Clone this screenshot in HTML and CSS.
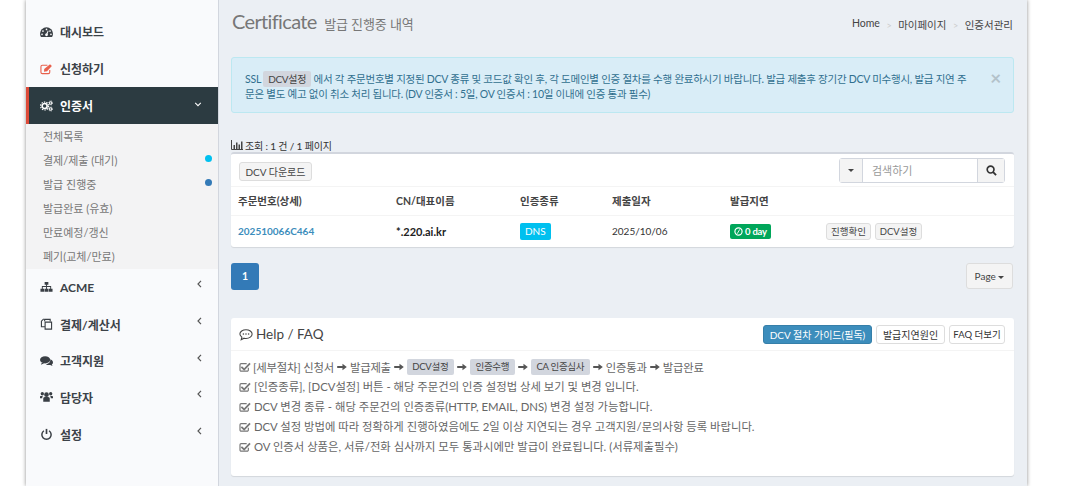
FILE: index.html
```html
<!DOCTYPE html>
<html lang="ko">
<head>
    <meta charset="UTF-8">
    <title>Certificate - 발급 진행중 내역</title>
    <link rel="stylesheet" href="styles.css">
</head>
<body>
<svg class="defs" width="0" height="0">
    <symbol id="i-check" viewBox="0 0 14 12"><path d="M11 7v2.600A1.400 1.400 0 0 1 9.600 11H2.400A1.400 1.400 0 0 1 1 9.600V3.400A1.400 1.400 0 0 1 2.400 2H9" fill="none" stroke="currentColor" stroke-width="1.400"/><path d="M3.400 5.200 6 7.600 12.200 1l1.600 1.500L6 10.400 1.900 6.600z" fill="currentColor"/></symbol>
    <symbol id="i-arrow" viewBox="0 0 12 10"><path d="M0 3.800h6.600V1L12 5 6.600 9V6.200H0z" fill="currentColor"/></symbol>
    <symbol id="i-left" viewBox="0 0 5 8"><path d="M4 .8 1 4l3 3.200" fill="none" stroke="currentColor" stroke-width="1.200"/></symbol>
</svg>
<div class="shell">
    <aside class="sidebar">
        <ul class="nav">
            <li class="nav-item">
                <svg class="nav-icon" viewBox="0 0 14 12"><path d="M7 1a7 7 0 0 0-7 7c0 1.300.4 2.500 1 3.500h12c.6-1 1-2.200 1-3.500a7 7 0 0 0-7-7z" fill="currentColor"/><circle cx="7" cy="3.200" r=".9" fill="#f9fafc"/><circle cx="3.200" cy="5" r=".9" fill="#f9fafc"/><circle cx="10.800" cy="5" r=".9" fill="#f9fafc"/><circle cx="2.200" cy="8.500" r=".9" fill="#f9fafc"/><circle cx="11.800" cy="8.500" r=".9" fill="#f9fafc"/><circle cx="7" cy="9" r="1.500" fill="#f9fafc"/><path d="M6.500 8.500 8.500 4.500l.7.300L7.800 9z" fill="#f9fafc"/></svg>
                <span>대시보드</span>
            </li>
            <li class="nav-item">
                <svg class="nav-icon icon-red" viewBox="0 0 14 12"><path d="M10.500 7v2.500A1.500 1.500 0 0 1 9 11H2.500A1.500 1.500 0 0 1 1 9.500V3.500A1.500 1.500 0 0 1 2.500 2H8" fill="none" stroke="currentColor" stroke-width="1.200"/><path d="M4.500 6 10.800.8l2 2L7.600 8.300l-3.300.6z" fill="currentColor"/></svg>
                <span>신청하기</span>
            </li>
            <li class="nav-item active">
                <svg class="nav-icon" viewBox="0 0 14 12"><circle cx="5" cy="6" r="2.700" fill="none" stroke="currentColor" stroke-width="1.700"/><circle cx="5" cy="6" r="4.300" fill="none" stroke="currentColor" stroke-width="1.300" stroke-dasharray="1.500 1.200"/><circle cx="11.500" cy="2.700" r="1.300" fill="none" stroke="currentColor" stroke-width="1.100"/><circle cx="11.500" cy="2.700" r="2.200" fill="none" stroke="currentColor" stroke-width=".8" stroke-dasharray="1 1"/><circle cx="11.500" cy="9.300" r="1.300" fill="none" stroke="currentColor" stroke-width="1.100"/><circle cx="11.500" cy="9.300" r="2.200" fill="none" stroke="currentColor" stroke-width=".8" stroke-dasharray="1 1"/></svg>
                <span>인증서</span>
                <svg class="nav-caret down" viewBox="0 0 10 6"><path d="M1.500 1 5 4.500 8.500 1" fill="none" stroke="currentColor" stroke-width="1.300"/></svg>
            </li>
            <li>
                <ul class="subnav">
                    <li>전체목록</li>
                    <li>결제/제출 (대기)<i class="dot dot-cyan"></i></li>
                    <li>발급 진행중<i class="dot dot-blue"></i></li>
                    <li>발급완료 (유효)</li>
                    <li>만료예정/갱신</li>
                    <li>폐기(교체/만료)</li>
                </ul>
            </li>
            <li class="nav-item nav-low">
                <svg class="nav-icon" viewBox="0 0 14 12"><path d="M5 .5h4v3H7.500V5H12v2.800h1.500V11h-4V7.800H11V6H7.500v1.800H9V11H5V7.800h1.500V6H3v1.800h1.500V11h-4V7.800H2V5h4.500V3.500H5z" fill="currentColor"/></svg>
                <span class="latin">ACME</span>
                <svg class="nav-caret"><use href="#i-left"/></svg>
            </li>
            <li class="nav-item nav-low">
                <svg class="nav-icon" viewBox="0 0 14 13"><path d="M5 3.500V1.500h4l2 0v2M5.500 4.500h7v7.500h-7zM5.500 9.500H1.500V3.500L4 1" fill="none" stroke="currentColor" stroke-width="1.200"/></svg>
                <span>결제/계산서</span>
                <svg class="nav-caret"><use href="#i-left"/></svg>
            </li>
            <li class="nav-item nav-low">
                <svg class="nav-icon" viewBox="0 0 14 12"><ellipse cx="5.500" cy="4.700" rx="5.500" ry="3.900" fill="currentColor"/><path d="M2 7.500 1 10l3.500-1.700z" fill="currentColor"/><path d="M11.500 4.500c1.700.8 2.500 1.900 2.500 3 0 .9-.5 1.700-1.300 2.300l.8 1.700-2.500-1.200c-1.800.3-3.500 0-4.700-.9 3 0 5.200-2 4.700-4.900z" fill="currentColor"/></svg>
                <span>고객지원</span>
                <svg class="nav-caret"><use href="#i-left"/></svg>
            </li>
            <li class="nav-item nav-low">
                <svg class="nav-icon" viewBox="0 0 14 12"><circle cx="7" cy="3.500" r="2.500" fill="currentColor"/><circle cx="2.500" cy="2.500" r="1.800" fill="currentColor"/><circle cx="11.500" cy="2.500" r="1.800" fill="currentColor"/><path d="M3.500 7.500C3.500 6.500 4.500 6 7 6s3.500.5 3.500 1.500V11h-7zM0 5.500C0 5 .7 4.800 2 4.800c.7 0 1 .2 1.400.5-.7.500-1 1-1 2H0zM14 5.500c0-.5-.7-.7-2-.7-.7 0-1 .2-1.400.5.700.5 1 1 1 2H14z" fill="currentColor"/></svg>
                <span>담당자</span>
                <svg class="nav-caret"><use href="#i-left"/></svg>
            </li>
            <li class="nav-item nav-low">
                <svg class="nav-icon" viewBox="0 0 14 12"><path d="M4.200 2.500a5 5 0 1 0 5.600 0" fill="none" stroke="currentColor" stroke-width="1.600"/><path d="M7 .5v5.500" stroke="currentColor" stroke-width="1.800"/></svg>
                <span>설정</span>
                <svg class="nav-caret"><use href="#i-left"/></svg>
            </li>
        </ul>
    </aside>

    <main class="main">
        <div class="page-head">
            <h1>Certificate <small>발급 진행중 내역</small></h1>
            <ol class="crumbs">
                <li>Home</li>
                <li>마이페이지</li>
                <li>인증서관리</li>
            </ol>
        </div>

        <div class="alert">
            <p>SSL <span class="tag tag-alert">DCV설정</span> 에서 각 주문번호별 지정된 DCV 종류 및 코드값 확인 후, 각 도메인별 인증 절차를 수행 완료하시기 바랍니다. 발급 제출후 장기간 DCV 미수행시, 발급 지연 주문은 별도 예고 없이 취소 처리 됩니다. (DV 인증서 : 5일, OV 인증서 : 10일 이내에 인증 통과 필수)</p>
            <span class="alert-close">×</span>
        </div>

        <div class="count">
            <svg class="count-icon" viewBox="0 0 12 10"><path d="M.5 0v9.500H12" fill="none" stroke="currentColor"/><path d="M2.500 5h1.500v4H2.500zM5 2.500h1.500V9H5zM7.500 4.500H9V9H7.500zM10 1.500h1.500V9H10z" fill="currentColor"/></svg>
            <span>조회 : 1 건 / 1 페이지</span>
        </div>

        <section class="card list-card">
            <div class="toolbar">
                <button class="btn btn-light">DCV 다운로드</button>
                <div class="search">
                    <span class="search-drop"><i class="caret"></i></span>
                    <span class="search-input">검색하기</span>
                    <span class="search-btn">
                        <svg viewBox="0 0 12 12" width="11" height="11"><circle cx="5" cy="5" r="3.700" fill="none" stroke="currentColor" stroke-width="1.800"/><path d="M7.800 7.800 11 11" stroke="currentColor" stroke-width="2"/></svg>
                    </span>
                </div>
            </div>
            <table class="orders">
                <thead>
                    <tr>
                        <th class="col-no">주문번호(상세)</th>
                        <th class="col-cn">CN/대표이름</th>
                        <th class="col-type">인증종류</th>
                        <th class="col-date">제출일자</th>
                        <th class="col-delay">발급지연</th>
                        <th></th>
                    </tr>
                </thead>
                <tbody>
                    <tr>
                        <td><a class="order-link">202510066C464</a></td>
                        <td class="cn">*.220.ai.kr</td>
                        <td><span class="label label-dns">DNS</span></td>
                        <td class="date">2025/10/06</td>
                        <td>
                            <span class="label label-day">
                                <svg viewBox="0 0 10 10" width="9" height="9"><circle cx="5" cy="5" r="4" fill="none" stroke="currentColor" stroke-width="1.300"/><path d="M6.500 2.500 3.500 7.500" fill="none" stroke="currentColor"/></svg>
                                0 day
                            </span>
                        </td>
                        <td class="row-actions">
                            <button class="btn btn-xs">진행확인</button>
                            <button class="btn btn-xs">DCV설정</button>
                        </td>
                    </tr>
                </tbody>
            </table>
        </section>

        <div class="pager-row">
            <span class="page-num">1</span>
            <button class="btn btn-page">Page <i class="caret"></i></button>
        </div>

        <section class="card help">
            <div class="help-head">
                <h2>
                    <svg viewBox="0 0 16 14" width="14" height="13"><path d="M8 1.500c3.800 0 7 2.200 7 5s-3.200 5-7 5c-.8 0-1.500-.1-2.200-.3L2.500 13l.8-3C2 9.100 1 7.900 1 6.500c0-2.800 3.200-5 7-5z" fill="none" stroke="currentColor" stroke-width="1.200"/><circle cx="5" cy="6.500" r=".9" fill="currentColor"/><circle cx="8" cy="6.500" r=".9" fill="currentColor"/><circle cx="11" cy="6.500" r=".9" fill="currentColor"/></svg>
                    Help / FAQ
                </h2>
                <div class="help-btns">
                    <button class="btn btn-guide">DCV 절차 가이드(필독)</button>
                    <button class="btn btn-white">발급지연원인</button>
                    <button class="btn btn-white btn-more">FAQ 더보기</button>
                </div>
            </div>
            <ul class="faq">
                <li class="steps">
                    <svg class="chk"><use href="#i-check"/></svg>
                    <span>[세부절차] 신청서</span>
                    <svg class="arr"><use href="#i-arrow"/></svg>
                    <span>발급제출</span>
                    <svg class="arr"><use href="#i-arrow"/></svg>
                    <span class="tag tag-a">DCV설정</span>
                    <svg class="arr"><use href="#i-arrow"/></svg>
                    <span class="tag tag-b">인증수행</span>
                    <svg class="arr"><use href="#i-arrow"/></svg>
                    <span class="tag tag-c">CA 인증심사</span>
                    <svg class="arr"><use href="#i-arrow"/></svg>
                    <span>인증통과</span>
                    <svg class="arr"><use href="#i-arrow"/></svg>
                    <span>발급완료</span>
                </li>
                <li><svg class="chk"><use href="#i-check"/></svg> [인증종류], [DCV설정] 버튼 - 해당 주문건의 인증 설정법 상세 보기 및 변경 입니다.</li>
                <li><svg class="chk"><use href="#i-check"/></svg> DCV 변경 종류 - 해당 주문건의 인증종류(HTTP, EMAIL, DNS) 변경 설정 가능합니다.</li>
                <li><svg class="chk"><use href="#i-check"/></svg> DCV 설정 방법에 따라 정확하게 진행하였음에도 2일 이상 지연되는 경우 고객지원/문의사항 등록 바랍니다.</li>
                <li><svg class="chk"><use href="#i-check"/></svg> OV 인증서 상품은, 서류/전화 심사까지 모두 통과시에만 발급이 완료됩니다. (서류제출필수)</li>
            </ul>
        </section>
    </main>
</div>
</body>
</html>
```

FILE: styles.css
```css
* {
    box-sizing: border-box;
}
html, body {
    height: 100%;
}
body {
    margin: 0;
    background: #fff;
    color: #444;
    font-family: Lato, "Noto Sans CJK KR", sans-serif;
    font-size: 11px;
    overflow: hidden;
}
ul, ol {
    list-style: none;
    margin: 0;
    padding: 0;
}
.defs {
    position: absolute;
}

.shell {
    display: flex;
    width: 1001px;
    height: 486px;
    margin-left: 26px;
    box-shadow: 0 0 4px rgba(0, 0, 0, .45);
}

/* sidebar */
.sidebar {
    width: 193px;
    flex: none;
    padding-top: 13px;
    background: #f9fafc;
    border-right: 1px solid #d2d6de;
}
.nav-item {
    display: flex;
    align-items: center;
    height: 37px;
    padding: 0 15px 0 14px;
    color: #3c4248;
    font-size: 12px;
    font-weight: 700;
}
.nav-low {
    height: 36.700px;
}
.nav-item span {
    flex: 1;
    margin-left: 7px;
}
.nav-icon {
    width: 13px;
    height: 12px;
    color: #3a3f45;
}
.icon-red {
    color: #e8604c;
}
.nav-caret {
    width: 5px;
    height: 8px;
    margin: -6px 1px 0 0;
    color: #555;
}
.nav-caret.down {
    width: 8px;
    height: 5px;
    margin: -3px 1px 0 0;
    color: #fff;
}
.nav-item.active {
    background: #2c3b41;
    border-left: 3px solid #dd4b39;
    padding-left: 11px;
    color: #fff;
}
.nav-item.active .nav-icon {
    color: #fff;
}
.subnav {
    padding: 0 6px 1px 17px;
    background: #f3f3f4;
    color: #777;
    font-size: 11px;
    height: 145px;
}
.subnav li {
    display: flex;
    align-items: center;
    justify-content: space-between;
    height: 24px;
}
.dot {
    width: 7px;
    height: 7px;
    margin-top: -3px;
    border-radius: 50%;
}
.dot-cyan {
    background: #00c0ef;
}
.dot-blue {
    background: #337ab7;
}

/* main */
.main {
    flex: 1;
    padding: 0 13px 0 12px;
    background: #ebeff4;
}
.page-head {
    display: flex;
    justify-content: space-between;
    align-items: center;
    height: 44px;
    padding: 0 1px;
}
.page-head h1 {
    margin: 0;
    color: #777;
    font-size: 20px;
    font-weight: 400;
    letter-spacing: -.65px;
    line-height: 44px;
}
.page-head small {
    margin-left: 3px;
    color: #777;
    font-size: 13px;
    letter-spacing: -.1px;
}
.crumbs {
    display: flex;
    margin-top: 4px;
    color: #444;
    font-size: 10.500px;
}
.crumbs li + li::before {
    content: ">";
    margin: 0 6.500px;
    color: #ccc;
    font-size: 9px;
}

.alert {
    display: flex;
    justify-content: space-between;
    height: 56px;
    margin-top: 13px;
    padding: 13px 12px 0 13px;
    background: #d9edf7;
    border: 1px solid #bce8f1;
    border-radius: 3px;
    color: #31708f;
    font-size: 10.500px;
    letter-spacing: -.25px;
    line-height: 15px;
}
.alert p {
    width: 727px;
    margin: 0;
}
.alert-close {
    margin-top: -1px;
    color: #b3c2ca;
    font-size: 19px;
    font-weight: 700;
    line-height: 15px;
}
.tag {
    display: inline-block;
    padding: 0 5px;
    background: #d2d6de;
    border-radius: 2px;
    color: #444;
    font-size: 10px;
    letter-spacing: -.3px;
    line-height: 16px;
}

.count {
    display: flex;
    align-items: center;
    gap: 2px;
    height: 14px;
    margin-top: 25px;
    color: #333;
    font-size: 10px;
    letter-spacing: -.15px;
}
.count-icon {
    width: 12px;
    height: 10px;
    color: #444;
}

.card {
    background: #fff;
    border-radius: 3px;
    box-shadow: 0 1px 1px rgba(0, 0, 0, .1);
}
.list-card {
    border-top: 2px solid #d2d6de;
}
.toolbar {
    display: flex;
    justify-content: space-between;
    align-items: center;
    height: 33px;
    padding: 0 9px 0 8px;
    border-bottom: 1px solid #f4f4f4;
}
.btn {
    font-family: inherit;
    background: #f4f4f4;
    border: 1px solid #ddd;
    border-radius: 3px;
    color: #444;
    padding: 0;
    white-space: nowrap;
}
.btn-light {
    width: 73px;
    height: 19px;
    margin-top: 2px;
    font-size: 10px;
}
.search {
    display: flex;
    height: 25px;
    margin-top: 1px;
    border: 1px solid #d2d6de;
    border-radius: 3px;
}
.search-drop {
    display: flex;
    align-items: center;
    justify-content: center;
    width: 23px;
    background: #f4f4f4;
    border-right: 1px solid #d2d6de;
}
.search-input {
    width: 114px;
    padding-left: 9px;
    color: #999;
    font-size: 11px;
    line-height: 23px;
}
.search-btn {
    display: flex;
    align-items: center;
    justify-content: center;
    width: 27px;
    background: #f4f4f4;
    border-left: 1px solid #d2d6de;
    color: #333;
}
.caret {
    display: inline-block;
    border-top: 4px solid currentColor;
    border-left: 4px solid transparent;
    border-right: 4px solid transparent;
    vertical-align: middle;
}
.search-drop .caret {
    border-width: 3px 3px 0;
    color: #444;
}

.orders {
    width: 100%;
    border-collapse: collapse;
    table-layout: fixed;
}
.orders th {
    height: 28px;
    padding: 0 0 0 7px;
    border-bottom: 1px solid #f4f4f4;
    color: #444;
    font-size: 10.500px;
    font-weight: 700;
    text-align: left;
}
.orders td {
    height: 32px;
    padding: 0 0 0 7px;
    color: #333;
    font-size: 10.500px;
}
.col-no { width: 158px; }
.col-cn { width: 124px; }
.col-type { width: 92px; }
.col-date { width: 118px; }
.col-delay { width: 102px; }
.order-link {
    color: #3c8dbc;
    font-size: 10px;
    font-weight: 700;
}
.orders .cn {
    color: #222;
    font-size: 11px;
    font-weight: 700;
}
.orders .date {
    font-size: 10px;
}
.label {
    display: inline-flex;
    align-items: center;
    gap: 2px;
    height: 17px;
    border-radius: 2px;
    color: #fff;
    font-size: 10px;
}
.label-dns {
    padding: 0 5px;
    background: #00c0ef;
}
.label-day {
    padding: 0 4px;
    background: #00a65a;
    height: 15px;
    font-size: 9.500px;
    font-weight: 700;
    letter-spacing: -.2px;
}
.row-actions {
    white-space: nowrap;
}
.orders .row-actions {
    padding-left: 1px;
}
.btn-xs {
    height: 17px;
    padding: 0 4px;
    font-size: 9.500px;
    margin-right: 1px;
}

.pager-row {
    display: flex;
    justify-content: space-between;
    align-items: flex-start;
    margin-top: 16px;
    padding-right: 1px;
}
.page-num {
    width: 28px;
    height: 27px;
    background: #337ab7;
    border-radius: 3px;
    color: #fff;
    font-weight: 700;
    line-height: 27px;
    text-align: center;
    font-size: 10.500px;
}
.btn-page {
    width: 47px;
    height: 26px;
    font-size: 10px;
}
.btn-page .caret {
    border-width: 3px 3px 0;
}

.help {
    height: 158px;
    margin-top: 28px;
}
.help-head {
    display: flex;
    justify-content: space-between;
    align-items: center;
    height: 33px;
    padding: 0 9px 0 8px;
    border-bottom: 1px solid #f4f4f4;
}
.help-head h2 {
    display: flex;
    align-items: center;
    gap: 3px;
    margin: 0;
    color: #444;
    font-size: 13.500px;
    font-weight: 400;
}
.help-btns {
    display: flex;
    gap: 4px;
}
.help-btns .btn {
    height: 19px;
    font-size: 10px;
}
.btn-guide {
    width: 109px;
    background: #3c8dbc;
    border-color: #367fa9;
    color: #fff;
}
.btn-white {
    width: 69px;
    background: #fff;
    color: #333;
}
.help-btns .btn-more {
    width: 56px;
    font-size: 9.500px;
}
.faq {
    padding: 6px 8px 0;
    color: #666;
    font-size: 11.350px;
}
.faq li {
    display: block;
    height: 20px;
    line-height: 19px;
    white-space: nowrap;
}
.faq .steps {
    display: flex;
    align-items: center;
    gap: 2px;
    letter-spacing: -.2px;
}
.chk {
    width: 12px;
    height: 10px;
    color: #777;
    vertical-align: -1px;
}
.arr {
    width: 10px;
    height: 8px;
    color: #555;
    margin: 0 1px;
}
.faq .tag {
    padding: 0;
    font-size: 9.500px;
    text-align: center;
}
.faq .tag-a { width: 47px; }
.faq .tag-b { width: 45px; }
.faq .tag-c { width: 59px; }
```
